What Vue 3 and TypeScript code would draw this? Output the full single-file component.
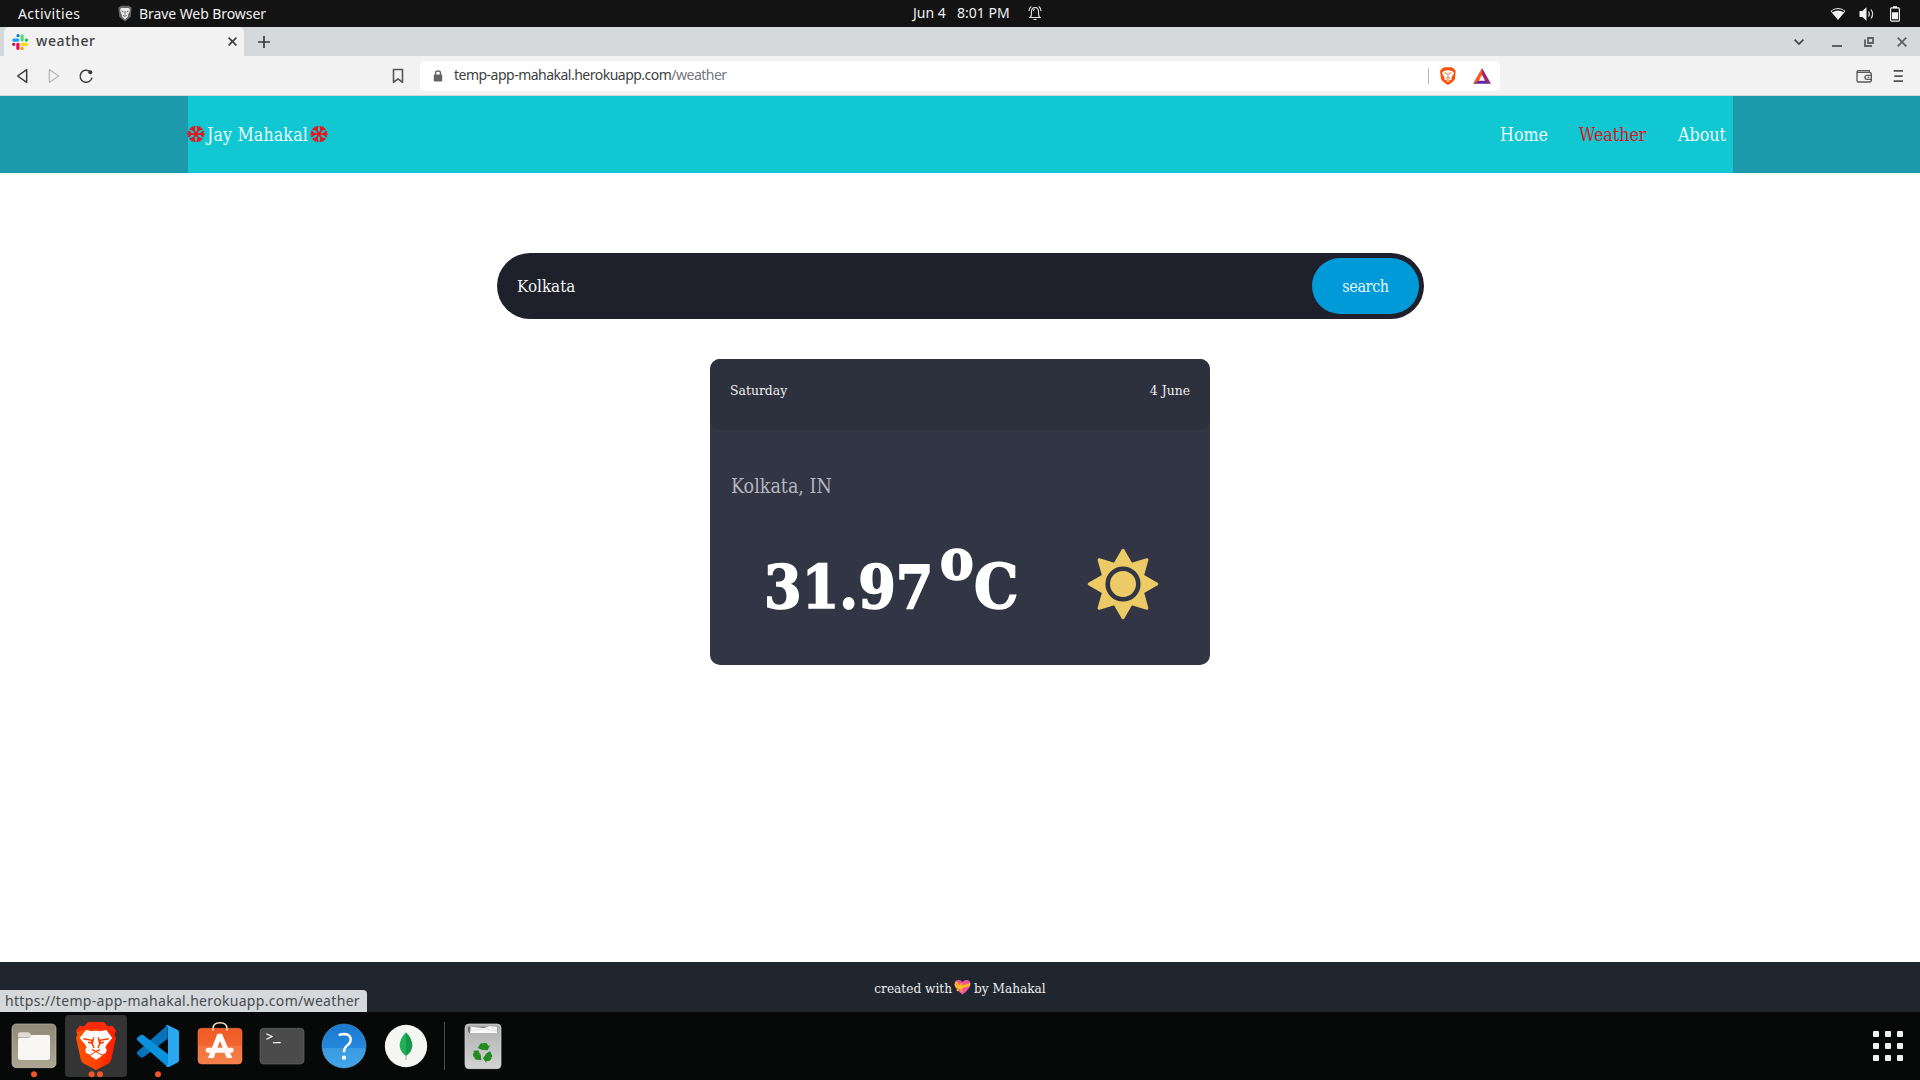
<script setup lang="ts">
import { ref } from 'vue'

const city = ref('Kolkata')

interface NavLink { label: string; active: boolean; cls: string }
const links: NavLink[] = [
  { label: 'Home', active: false, cls: 'l-home' },
  { label: 'Weather', active: true, cls: 'l-weather' },
  { label: 'About', active: false, cls: 'l-about' },
]
const flakeAngles = [0, 60, 120, 180, 240, 300]
const gridCells = Array.from({ length: 9 }, (_, i) => i)
</script>

<template>
  <div class="screen">
    <header class="topbar">
      <div class="side left">
        <span class="activities">Activities</span>
        <svg class="shield" width="14" height="17" viewBox="0 0 14 17">
          <path d="M3 .8h8l2.600 2-.9 9-5.700 4.800L1.300 11.800.4 2.800z" fill="#66696b" />
          <path d="M3 3h8l1 2.500-2 4.500 0 1.500-3 3-3-3V10L2 5.500z" fill="#e9e9e9" />
          <path d="M3.500 6l2 .8M10.500 6l-2 .8M7 6v3.500M5 10.500l2 .7 2-.7" stroke="#555" stroke-width=".9" fill="none" />
        </svg>
        <span class="appname">Brave Web Browser</span>
      </div>
      <div class="clock"><span class="date">Jun 4</span><span class="time">8:01 PM</span>
        <svg class="bell" width="14" height="16" viewBox="0 0 14 16" fill="none" stroke="#e6e6e6" stroke-width="1.100">
          <path d="M1 12.500h12M2.500 12.500c1-1.500 1-3 1-5.500 0-3 1.200-4.500 3.500-4.500s3.500 1.500 3.500 4.500c0 2.500 0 4 1 5.500M5.500 14.500h3M1 6c0-2 .8-3.500 2.300-4.500M13 6c0-2-.8-3.500-2.300-4.500M5.500 6c0-1.300.5-2 1.500-2" />
        </svg>
      </div>
      <div class="side right">
        <svg width="16" height="14" viewBox="0 0 16 14"><path d="M.5 4Q8-2.200 15.500 4L8 13z" fill="#f2f2f2" /><path d="M2 4.600Q8 .8 14 4.600" fill="none" stroke="#131313" stroke-width="1.500" /></svg>
        <svg width="16" height="14" viewBox="0 0 16 14"><path d="M.5 4h2.800L7.500.3v13.400L3.300 10H.5z" fill="#f2f2f2" /><path d="M9.500 4.500q1.700 2.500 0 5M12 2.500q3.200 4.500 0 9" fill="none" stroke="#d8d8d8" stroke-width="1.200" /></svg>
        <svg width="10" height="16" viewBox="0 0 10 16"><path d="M3 .3h4v2H3zM2 6.300h6v7H2z" fill="#f2f2f2" /><rect x=".6" y="1.800" width="8.800" height="13.400" rx="1" fill="none" stroke="#f2f2f2" stroke-width="1.200" /></svg>
      </div>
    </header>

    <div class="tabs">
      <div class="tab">
        <svg class="fav" width="16" height="16" viewBox="0 0 16 16" stroke-width="3.200" stroke-linecap="round">
          <path d="M1.800 6.100h4" stroke="#1f9df1" /><path d="M6 1.700h.01" stroke="#0b7ec4" />
          <path d="M10.100 1.800v4" stroke="#49e06c" /><path d="M14.400 6.100h.01" stroke="#1db954" />
          <path d="M10.200 10.300h4" stroke="#ffd60a" /><path d="M10.100 14.400h.01" stroke="#fb9a0c" />
          <path d="M5.900 10.300v4" stroke="#ee0a50" /><path d="M1.700 10.300h.01" stroke="#c8104e" />
        </svg>
        <span class="tabname">weather</span>
        <svg class="tabx" width="9" height="9" viewBox="0 0 9 9"><path d="M.6.6l7.800 7.800M8.400.6L.6 8.400" stroke="#404040" stroke-width="1.600" /></svg>
      </div>
      <svg class="plus" width="12" height="12" viewBox="0 0 12 12"><path d="M6 0v12M0 6h12" stroke="#3a3a3a" stroke-width="1.700" /></svg>
      <div class="winctl">
        <svg width="10" height="6" viewBox="0 0 10 6"><path d="M.6.6L5 5 9.400.6" fill="none" stroke="#444" stroke-width="1.700" /></svg>
        <svg class="c-min" width="10" height="10" viewBox="0 0 10 10"><path d="M0 9h10" stroke="#5e6164" stroke-width="2" /></svg>
        <svg class="c-max" width="10" height="10" viewBox="0 0 10 10" fill="none" stroke="#5e6164" stroke-width="1.800"><path d="M4 1h5v5H4zM1 2.500V9h7" /></svg>
        <svg class="c-close" width="10" height="10" viewBox="0 0 10 10"><path d="M.7.7l8.600 8.600M9.300.7L.7 9.300" stroke="#5e6164" stroke-width="1.800" /></svg>
      </div>
    </div>

    <div class="toolbar">
      <svg class="tools" width="100" height="39" viewBox="0 0 300 117" fill="none" stroke-width="4.500" stroke-linejoin="round">
        <path d="M80 41v38L53 60z" stroke="#3b3b3b" />
        <path d="M148 41v38l28-19z" stroke="#bdbdbd" />
        <path d="M270 47a18 18 0 1 0 6 18" stroke="#3b3b3b" />
        <circle cx="271" cy="49" r="6" fill="#3b3b3b" />
      </svg>
      <svg class="mark" width="12" height="16" viewBox="0 0 12 16"><path d="M1.500 1.500h9v12.800L6 10.800l-4.500 3.500z" fill="none" stroke="#555" stroke-width="1.600" stroke-linejoin="round" /></svg>
      <div class="urlbar">
        <svg class="lock" width="10" height="12" viewBox="0 0 10 12"><rect x=".8" y="4.500" width="8.400" height="7" rx="1" fill="#606468" /><path d="M2.500 5V3Q2.500 1 5 1t2.500 2v2" fill="none" stroke="#606468" stroke-width="1.400" /></svg>
        <span class="url">temp-app-mahakal.herokuapp.com<i>/weather</i></span>
        <svg class="urlicons" width="72" height="30" viewBox="84 183 216 90">
          <path d="M85.500 205v47" stroke="#b4b4b4" stroke-width="3" />
          <path d="M133 202h22l7 4 5 7-2 24q-2 6-21 18-19-12-21-18l-3-24 5-7z" fill="#fb5209" />
          <path d="M130 214l14-4 14 4 4 6-8 13 1 5-11 8-11-8 1-5-8-13z" fill="#fff" />
          <path d="M133 218l8 3M155 218l-8 3M144 220v12l-6 4M144 232l6 4M138 242l6-3 6 3" fill="none" stroke="#fb5209" stroke-width="2.500" />
          <path d="M246 204l-27 47 17-7 10-20z" fill="#ff5527" /><path d="M246 204l27 47-17-7-10-20z" fill="#9e236b" />
          <path d="M219 251h54l-17-9h-20z" fill="#602a94" />
        </svg>
      </div>
      <svg class="wallet" width="53" height="39" viewBox="1361 168 159 117" fill="none" stroke="#5b5b5b" stroke-width="4">
        <path d="M1407 218v-6h-33q-4 0-4 4v26q0 4 4 4h33q6 0 6-6v-16q0-7-6-7h-35" />
        <path d="M1413 226h-14q-5 0-5 6t5 6h14M1402 232h5" />
        <path d="M1480 212.500h28M1482 228.500h25M1480 243.500h28" stroke="#555" stroke-width="5" />
      </svg>
    </div>

    <main class="page">
      <nav class="nav">
        <div class="navin">
          <div class="brand">
            <svg v-for="k in 2" :key="k" :class="'flake f' + k" width="18" height="18" viewBox="-9 -9 18 18" fill="none" stroke="#ee1117">
              <g v-for="a in flakeAngles" :key="a" :transform="`rotate(${a + 90})`">
                <path d="M0 0v-8.600" stroke-width="1.700" /><path d="M-2.900-7.700L0-4.800 2.900-7.700" stroke-width="1.900" />
              </g>
            </svg>
            <span class="brandname">Jay Mahakal</span>
          </div>
          <div class="links">
            <a v-for="l in links" :key="l.label" :class="[l.cls, { active: l.active }]">{{ l.label }}</a>
          </div>
        </div>
      </nav>

      <div class="search">
        <span class="query">{{ city }}</span>
        <button class="go"><span>search</span></button>
      </div>

      <section class="card">
        <div class="cardtop"><span class="day">Saturday</span><span class="dm">4 June</span></div>
        <div class="place">Kolkata, IN</div>
        <div class="tempRow">
          <div class="temp"><span class="num">31.97</span><span class="deg">o</span><span class="unit">C</span></div>
          <svg class="sun" width="72" height="72" viewBox="-36 -36 72 72">
            <path d="M0-33.800L8.300-19.500 23.900-24.200 19.500-8.300 33.800 0 19.500 8.300 23.900 24.200 8.300 19.500 0 33.800-8.300 19.500-23.900 24.200-19.500 8.300-33.800 0-19.500-8.300-23.900-24.200-8.300-19.500z" fill="#eccb67" stroke="#eccb67" stroke-width="3" stroke-linejoin="round" />
            <circle r="15.300" fill="#eccb67" stroke="#323544" stroke-width="4.600" />
          </svg>
        </div>
      </section>

      <footer class="foot">
        <span class="f-a">created with</span>
        <svg class="heart" width="17" height="16" viewBox="0 0 17 16">
          <path d="M8.500 15.500Q1 10 .6 5.200.6 1 4.500 1 7.300 1 8.500 3.300 9.700 1 12.500 1q3.900 0 3.900 4.200Q16 10 8.500 15.500z" fill="#f0549b" />
          <path d="M.6 5.500l5.400 1.700L16.300 4l-.3 3-9 2.500-5.500-1z" fill="#fcc21b" />
          <path d="M5.500 7.500L2.500 3.500 1 6M6 8l-3 4M6 8l2 4.500M6 7.500L8 4.500" fill="none" stroke="#fcc21b" stroke-width="1.500" />
        </svg>
        <span class="f-b">by Mahakal</span>
        <div class="status"><span>https://temp-app-mahakal.herokuapp.com/weather</span></div>
      </footer>
    </main>

    <div class="dock">
      <svg class="cell" viewBox="9 186 186 204">
        <defs>
          <linearGradient id="gFile" x1="0" y1="0" x2="0" y2="1"><stop offset="0" stop-color="#8f8975" /><stop offset="1" stop-color="#aca692" /></linearGradient>
          <linearGradient id="gBrave"><stop offset="0" stop-color="#ff5500" /><stop offset=".5" stop-color="#ff4200" /><stop offset="1" stop-color="#ff1a00" /></linearGradient>
          <linearGradient id="gHelp" x1="0" y1="0" x2="0" y2="1"><stop offset="0" stop-color="#1b79d0" /><stop offset=".54" stop-color="#2489dd" /><stop offset=".55" stop-color="#3a9be1" /><stop offset="1" stop-color="#43a5e8" /></linearGradient>
          <linearGradient id="gSoft" x1="0" y1="0" x2="0" y2="1"><stop offset="0" stop-color="#f15a24" /><stop offset=".48" stop-color="#f2652f" /><stop offset=".5" stop-color="#f3743f" /><stop offset="1" stop-color="#f58049" /></linearGradient>
          <linearGradient id="gTrash" x1="0" y1="0" x2="0" y2="1"><stop offset="0" stop-color="#b0b0b0" /><stop offset="1" stop-color="#d3d3d3" /></linearGradient>
        </defs>
        <rect x="36" y="222" width="132" height="131" rx="13" fill="url(#gFile)" stroke="#c9c4b4" stroke-width="2" />
        <path d="M54 262v-8q0-7 7-7h22q5 0 8 4l3 4h49q7 0 7 7z" fill="#dedbd0" />
        <path d="M54 270q0-7 7-7h25q5 0 8-4t8-4h41q7 0 7 7v61q0 7-7 7H61q-7 0-7-7z" fill="#f8f7f5" />
        <circle cx="102" cy="372.500" r="9" fill="#f1552a" />
      </svg>
      <svg class="cell" viewBox="195 186 186 204">
        <rect x="195" y="195" width="186" height="186" rx="12" fill="#343434" />
        <path d="M265 216h46l13 14 12-3 12 15-4 12 4 10-14 63q-2 9-9 14l-27 14q-6 5-10 5t-9-5l-27-14q-8-5-10-14l-14-63 4-10-4-12 12-15 12 3z" fill="url(#gBrave)" />
        <path d="M265 216h46l13 14 12-3 12 15-4 5q-12-11-56-11t-56 11l-4-5 12-15 12 3z" fill="#ff2a0a" />
        <path d="M258 240l17 4q13-4 26 0l18-4 18 24-17 20-4 8 4 7-2 10-17 7-13-8-13 8-17-7-2-10 4-7-4-8-17-20z" fill="#fff" />
        <path d="M250 266l26 5-2 8-10-2M326 266l-26 5 2 8 10-2M281 262l-4 20 5 12M295 262l4 20-5 12M276 299l12 5 12-5" fill="none" stroke="#ff4000" stroke-width="4.500" />
        <path d="M268 317l20-12 21 12-21 14z" fill="#fff" stroke="#ff3c00" stroke-width="3" />
        <circle cx="275" cy="372.500" r="9" fill="#f1552a" /><circle cx="300" cy="372.500" r="9" fill="#f1552a" />
      </svg>
      <svg class="cell" viewBox="381 186 186 204">
        <path d="M411 306q-2 4 1 7l10 9q4 2 8 0l73-56v-41z" fill="#0872bb" />
        <path d="M411 270q-2-4 1-7l10-8q4-2 8 0l74 58v36q-4 0-8-4z" fill="#0a91dc" />
        <path d="M503 225l29 14q5 2 5 8v83q0 6-5 8l-24 12q-6 2-11-2 7 0 7-8V234q0-7-8-6 3-3 7-3z" fill="#29a8f1" />
        <circle cx="474" cy="372.500" r="9" fill="#f1552a" />
      </svg>
      <svg class="cell" viewBox="567 186 186 204">
        <rect x="594" y="235" width="132" height="107" rx="11" fill="url(#gSoft)" stroke="#f68555" stroke-width="1.500" />
        <path d="M639 242v-6q0-18 21-18t21 18v6" fill="none" stroke="#f4dfb5" stroke-width="4.500" />
        <path d="M624 324l28-73h14l31 73h-17l-20-51-19 51z" fill="#fff" />
        <rect x="617" y="293" width="84" height="15" rx="7" fill="#fff8f2" />
      </svg>
      <svg class="cell" viewBox="753 186 186 204">
        <rect x="780" y="235" width="132" height="107" rx="11" fill="#4b4b4b" stroke="#676767" stroke-width="2" />
        <path d="M799 251l17 8.500-17 8.500M819 278h23" fill="none" stroke="#fff" stroke-width="3.500" />
      </svg>
      <svg class="cell" viewBox="39 36 186 204">
        <circle cx="132" cy="138" r="66" fill="url(#gHelp)" stroke="#58a8e4" stroke-width="1.500" />
        <path d="M116 106q7-4 17-4 19 1 19 17 0 10-11 18-9 7-9 20" fill="none" stroke="#fff" stroke-width="7" />
        <circle cx="132" cy="173" r="6.500" fill="#fff" />
      </svg>
      <svg class="cell" viewBox="225 36 186 204">
        <circle cx="318" cy="138" r="63.500" fill="#f5f5f4" />
        <path d="M318 97q-20 20-19 42 2 18 19 29z" fill="#1eb157" /><path d="M318 97q20 20 19 42-2 18-19 29z" fill="#18964d" />
        <path d="M318 165v15" stroke="#a8aaa8" stroke-width="3" />
      </svg>
      <svg class="cell last" viewBox="411 36 210 204">
        <path d="M433.500 66v144" stroke="#4a4a4a" stroke-width="3" />
        <rect x="495" y="72" width="108" height="134" rx="12" fill="url(#gTrash)" stroke="#dedede" stroke-width="2" />
        <path d="M504 80h90v11q0 9-8 9h-74q-8 0-8-9z" fill="#707070" /><path d="M510 99l2-19 40 4 18-6 22 3v14q0 5-5 5h-72q-3 0-5-1z" fill="#f8f8f8" />
        <path d="M512 92l42-6 36 8M570 79l20 13" stroke="#c4c4c4" stroke-width="1.500" fill="none" />
        <g v-for="r in [0, 120, 240]" :key="r" :transform="`rotate(${r} 549 159)`" fill="#238a20">
          <path d="M533 144l8-12q2-3 6-3l7 12-5 10z" />
          <path d="M549 129h7q4 0 6 4l3 5 5-3-7 16-16-2 5-3z" />
        </g>
      </svg>
      <div class="apps"><i v-for="g in gridCells" :key="g"></i></div>
    </div>
  </div>
</template>

<style>
html, body { margin: 0; overflow: hidden; }
</style>

<style scoped>
.screen { width: 1920px; height: 1080px; display: flex; flex-direction: column; background: #fff; font-family: "Noto Sans", sans-serif; overflow: hidden; }
.screen * { box-sizing: border-box; }
svg { display: block; flex: none; }
span, a { white-space: nowrap; }

.topbar { height: 27px; background: #131313; color: #f0f0f0; display: flex; align-items: center; font-size: 14px; line-height: 26px; }
.side { flex: 1; display: flex; align-items: center; }
.activities { margin-left: 18px; width: 100px; letter-spacing: .4px; }
.appname { margin-left: 7px; letter-spacing: -.07px; }
.shield { margin-top: -1px; }
.clock { display: flex; align-items: center; width: 130px; margin-left: 56px; margin-top: -1px; }
.date { width: 44px; letter-spacing: 0; }
.time { width: 71px; letter-spacing: 0; }
.bell { margin-top: -1px; }
.right { justify-content: flex-end; gap: 13px; padding-right: 20px; }
.right svg:last-child { margin-left: 2px; }

.tabs { height: 29px; background: #d5d9dc; display: flex; padding-left: 4px; align-items: center; }
.tab { width: 240px; height: 29px; background: #f2f2f2; border-radius: 5px 5px 0 0; display: flex; align-items: center; padding: 0 8px; color: #3e4144; }
.tabname { margin-left: 8px; flex: 1; font-size: 14px; font-weight: 500; letter-spacing: .6px; line-height: 26px; margin-top: -1px; }
.tabx { margin-right: -1px; }
.plus { margin-left: 14px; }
.winctl { margin-left: auto; display: flex; align-items: center; padding-right: 13px; }
.c-min { margin-left: 28px; }
.c-max { margin-left: 22px; }
.c-close { margin-left: 23px; }

.toolbar { height: 40px; background: #f2f2f2; border-bottom: 1px solid #d3d6d8; display: flex; align-items: center; }
.mark { margin-left: 292px; }
.urlbar { margin-left: 16px; width: 1080px; height: 30px; background: #fff; border-radius: 5px; display: flex; align-items: center; padding-left: 13px; }
.url { margin-left: 11px; font-size: 14px; line-height: 28px; color: #3d3f42; letter-spacing: -.51px; margin-top: -1px; }
.url i { font-style: normal; color: #75787c; }
.urlicons { margin-left: auto; }
.wallet { margin-left: auto; margin-right: 13px; }

.page { height: 916px; display: flex; flex-direction: column; align-items: center; font-family: "DejaVu Serif Condensed", "DejaVu Serif", serif; font-stretch: condensed; color: #fff; }
.nav { width: 100%; height: 77px; background: #1c9aab; display: flex; justify-content: center; }
.navin { width: 1545px; margin-left: 1px; background: #11c7d2; display: flex; justify-content: space-between; align-items: center; font-size: 17.700px; line-height: 30px; }
.brand { display: flex; align-items: center; margin-left: -1px; }
.flake { margin-top: -1px; }
.f2 { order: 3; }
.brandname { order: 2; width: 105px; padding-left: 2px; letter-spacing: .12px; color: #e9fbfc; }
.links { display: flex; color: #e9fbfc; }
.l-home { width: 79px; } .l-weather { width: 99px; } .l-about { width: 55px; }
.links .active { color: #dd1720; }

.search { margin-top: 80px; margin-left: 1px; width: 927px; height: 66px; border-radius: 33px; background: #1e202b; display: flex; align-items: center; justify-content: space-between; padding: 0 5px 0 20px; }
.query { font-size: 16.900px; color: #f3f3f3; }
.go { width: 107px; height: 56px; border: 0; border-radius: 28px; background: #009ad8; color: #e4f6fd; font-family: inherit; font-stretch: inherit; font-size: 16px; letter-spacing: -.35px; padding: 1px 0 0; }

.card { margin-top: 40px; width: 500px; height: 306px; border-radius: 10px; background: #323544; display: flex; flex-direction: column; }
.cardtop { height: 71px; border-radius: 10px; background: #2d303d; display: flex; justify-content: space-between; padding: 19px 20px 0; font-size: 13.800px; line-height: 24px; color: #eee; }
.place { margin: 40px 0 0 21px; font-size: 19.500px; line-height: 34px; color: #b5b6bf; }
.tempRow { display: flex; align-items: flex-start; margin-top: 43px; height: 74px; }
.temp { margin-left: 54px; margin-top: 3px; width: 322px; display: flex; align-items: baseline; font-weight: 700; font-size: 60px; line-height: 74px; -webkit-text-stroke: 1.600px #fff; }
.num { width: 176px; letter-spacing: .1px; }
.deg { font-size: 56px; width: 34px; position: relative; top: -29px; }
.unit { font-size: 62px; }
.sun { margin-top: 1px; margin-left: .5px; }

.foot { margin-top: auto; width: 100%; height: 50px; background: #1f262d; display: flex; align-items: center; justify-content: center; position: relative; font-size: 13.500px; color: #eceef0; line-height: 26px; padding-top: 2px; }
.heart { margin: 0 3px 2px 2px; }
.status { position: absolute; left: 0; bottom: 0; width: 367px; height: 22px; background: #d5d9dc; border-radius: 0 4px 0 0; color: #474a4d; font-family: "Noto Sans", sans-serif; font-stretch: normal; font-size: 14px; letter-spacing: .32px; line-height: 21px; padding-left: 5px; }

.dock { height: 68px; background: #070808; display: flex; padding-left: 3px; align-items: center; }
.cell { width: 62px; height: 68px; }
.cell.last { width: 70px; }
.apps { margin-left: auto; margin-right: 17px; display: grid; grid-template-columns: repeat(3, 6px); gap: 6px; }
.apps i { width: 6px; height: 6px; background: #f0f0f0; border-radius: 1px; }
</style>
